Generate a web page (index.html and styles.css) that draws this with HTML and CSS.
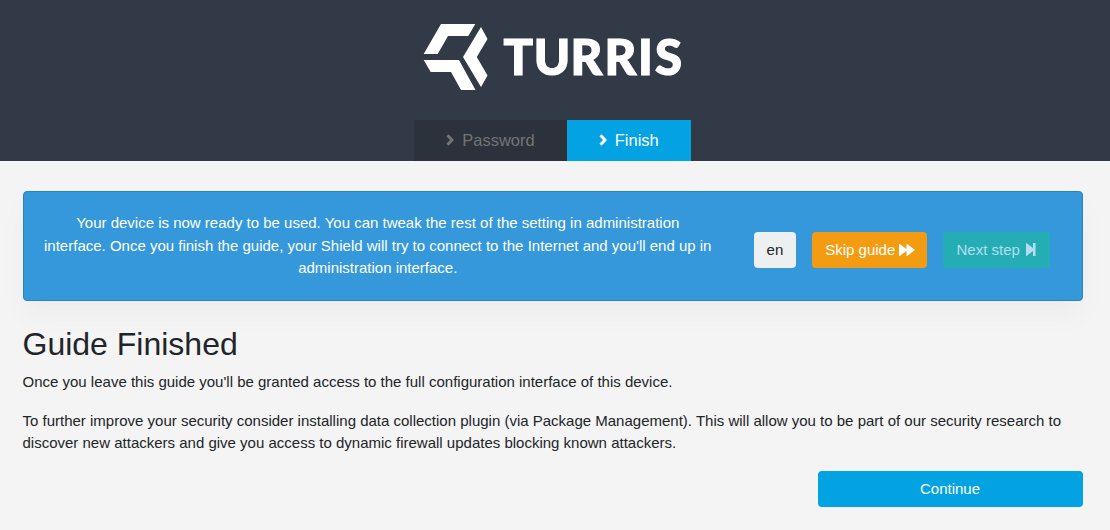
FILE: index.html
```html
<!DOCTYPE html>
<html lang="en">
<head>
<meta charset="utf-8">
<title>Turris guide</title>
<link rel="stylesheet" href="styles.css">
</head>
<body>
<header class="header">
  <svg class="logo" width="259" height="70" viewBox="0 0 259 70" role="img" aria-label="Turris">
    <path d="M18 2H52.3L45.300 14H25L14.700 32H.700zM58 5l6.500 12-10.700 18 10.700 18.500-6.500 11.500L40 35zM.7 38H36L52.500 68H38L28 50H7.700z"/>
    <text class="logo-text" y="52.700" x="80.400 110.800 147.600 181.600 214.900 231.900">TURRIS</text>
  </svg>
  <nav class="steps">
    <a class="step step-done"><svg class="chevron" viewBox="0 0 8 12"><path d="M1.500 1.300 6 6 1.500 10.700"/></svg>Password</a>
    <a class="step step-active"><svg class="chevron" viewBox="0 0 8 12"><path d="M1.500 1.300 6 6 1.500 10.700"/></svg>Finish</a>
  </nav>
</header>
<main class="content">
  <section class="notice">
    <p class="notice-text">Your device is now ready to be used. You can tweak the rest of the setting in administration interface. Once you finish the guide, your Shield will try to connect to the Internet and you'll end up in administration interface.</p>
    <div class="actions">
      <button class="btn btn-light">en</button>
      <button class="btn btn-warning">Skip guide <svg class="icon-forward" viewBox="0 0 16 12"><path d="M0 .8Q0-.3 1 .2L7.500 5V.8Q7.500-.3 8.500.2L15.300 5.400Q16 6 15.300 6.600L8.500 11.800Q7.500 12.300 7.500 11.200V7L1 11.800Q0 12.300 0 11.200z"/></svg></button>
      <button class="btn btn-next" disabled>Next step <svg class="icon-step" viewBox="0 0 10 13"><path d="M0 .7Q0-.2.8.2L7 5V0H9.500V13H7V8L.8 12.800Q0 13.200 0 12.300z"/></svg></button>
    </div>
  </section>
  <h1 class="title">Guide Finished</h1>
  <p class="text">Once you leave this guide you'll be granted access to the full configuration interface of this device.</p>
  <p class="text">To further improve your security consider installing data collection plugin (via Package Management). This will allow you to be part of our security research to discover new attackers and give you access to dynamic firewall updates blocking known attackers.</p>
  <button class="btn btn-continue">Continue</button>
</main>
</body>
</html>
```

FILE: styles.css
```css
* { box-sizing: border-box; }
body {
  margin: 0;
  background: #f4f4f4;
  color: #212529;
  font: 15px/22.5px "Liberation Sans", Arial, sans-serif;
}
.header {
  height: 161px;
  padding: 22px 5px 0 0;
  background: #333a47;
  display: flex;
  flex-direction: column;
  align-items: center;
  justify-content: space-between;
}
.logo { fill: #fff; overflow: visible; }
.logo-text {
  font: 900 49px Lato, sans-serif;
  stroke: #fff;
  stroke-width: 1.2px;
}
.steps { display: flex; height: 41px; }
.step {
  display: flex;
  align-items: center;
  gap: 8px;
  padding: 0 32px;
  font-size: 16.5px;
}
.step-done { background: #2b323b; color: #727476; }
.step-active { background: #02a2e3; color: #fff; }
.chevron {
  width: 8px;
  height: 12px;
  margin-top: -1px;
  fill: none;
  stroke: currentColor;
  stroke-width: 3;
}
.content {
  width: 1105px;
  padding: 30px 22.5px 0;
  display: flex;
  flex-direction: column;
}
.notice {
  height: 109.5px;
  margin-bottom: 24px;
  padding: 0 32px 0 20px;
  display: flex;
  align-items: center;
  justify-content: space-between;
  border: 1px solid #2b82c0;
  border-radius: 4px;
  background: #3498db;
  color: #fff;
  box-shadow: 0 15px 30px rgba(0, 0, 0, .03);
}
.notice-text { width: 668.5px; margin: 0; text-align: center; }
.actions { display: flex; gap: 16px; padding-top: 8px; }
.btn {
  height: 36px;
  padding: 0 13px;
  border: 0;
  border-radius: 4px;
  color: #fff;
  font: inherit;
  white-space: nowrap;
}
.btn-light { background: #ecf0f1; color: #212529; }
.btn-warning { background: #f39c12; }
.btn-next { background: #24aeb3; color: #b5dcf1; }
.icon-forward { width: 16px; height: 12px; margin-right: -1px; fill: currentColor; vertical-align: -1px; }
.icon-step { width: 10px; height: 13px; margin: 0 .5px 0 2px; fill: currentColor; vertical-align: -1.5px; }
.title { margin: 0 0 8.5px; font-size: 32px; font-weight: 400; line-height: 38.4px; }
.text { margin: 0 0 16px; }
.btn-continue { width: 265px; align-self: flex-end; background: #02a2e3; }
```
